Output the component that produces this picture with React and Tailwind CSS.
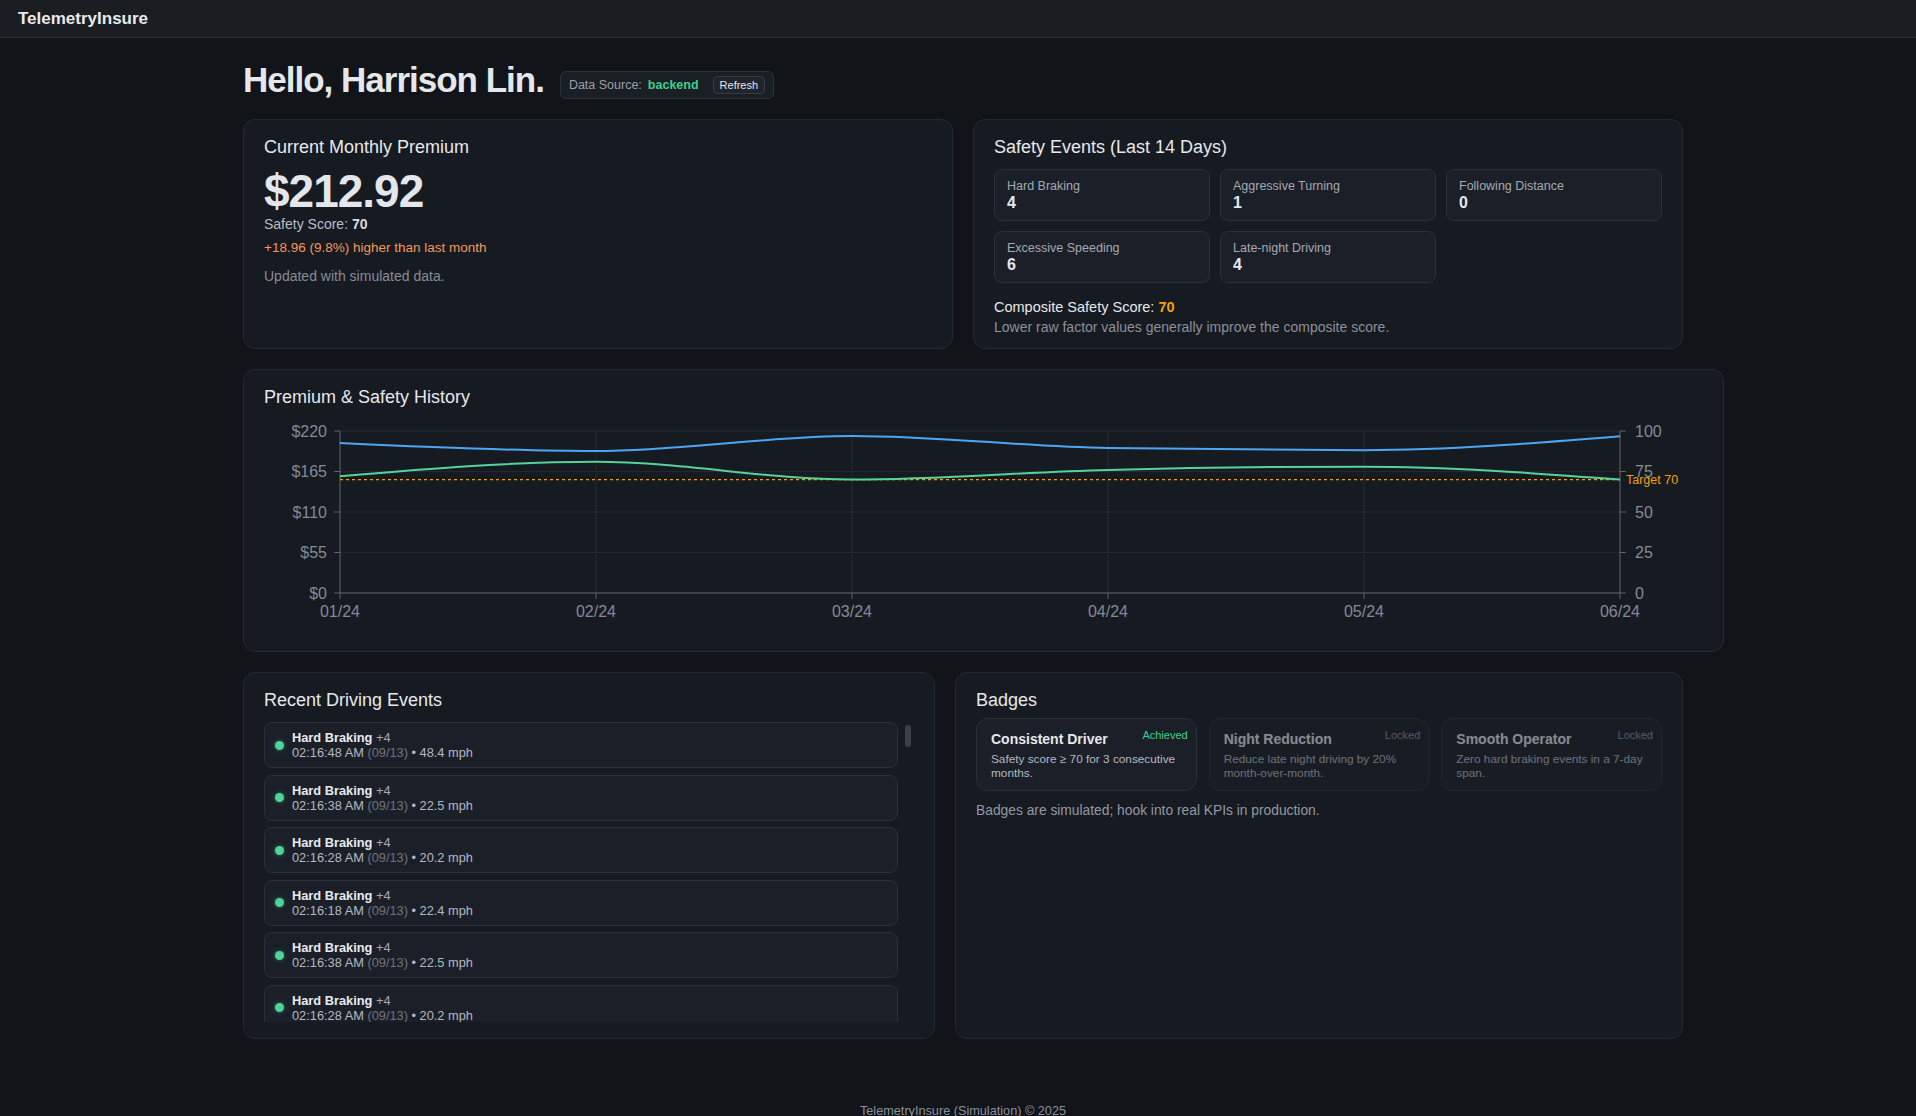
import React from "react";

const months = ["01/24", "02/24", "03/24", "04/24", "05/24", "06/24"];
const premiums = [203.7, 192.8, 213.2, 196.9, 193.96, 212.92];
const scores = [72, 81, 70, 76, 78, 70];

const factors = [
  ["Hard Braking", 4],
  ["Aggressive Turning", 1],
  ["Following Distance", 0],
  ["Excessive Speeding", 6],
  ["Late-night Driving", 4],
];

const badges = [
  { name: "Consistent Driver", desc: "Safety score ≥ 70 for 3 consecutive months.", done: true },
  { name: "Night Reduction", desc: "Reduce late night driving by 20% month-over-month.", done: false },
  { name: "Smooth Operator", desc: "Zero hard braking events in a 7-day span.", done: false },
];

const cycle = [
  ["02:16:48 AM", "48.4"],
  ["02:16:38 AM", "22.5"],
  ["02:16:28 AM", "20.2"],
  ["02:16:18 AM", "22.4"],
  ["02:16:38 AM", "22.5"],
  ["02:16:28 AM", "20.2"],
];
const events = Array.from({ length: 78 }, (_, i) => cycle[i % cycle.length]);

// d3-style monotone X curve
function monotonePath(pts) {
  const n = pts.length;
  const h = [];
  const m = [];
  for (let i = 0; i < n - 1; i++) {
    h.push(pts[i + 1][0] - pts[i][0]);
    m.push((pts[i + 1][1] - pts[i][1]) / h[i]);
  }
  const t = new Array(n).fill(0);
  for (let i = 1; i < n - 1; i++) {
    const s0 = m[i - 1];
    const s1 = m[i];
    const p = (s0 * h[i] + s1 * h[i - 1]) / (h[i - 1] + h[i]);
    t[i] = (Math.sign(s0) + Math.sign(s1)) * Math.min(Math.abs(s0), Math.abs(s1), 0.5 * Math.abs(p)) || 0;
  }
  t[0] = (3 * m[0] - t[1]) / 2;
  t[n - 1] = (3 * m[n - 2] - t[n - 2]) / 2;
  let d = `M${pts[0][0]},${pts[0][1]}`;
  for (let i = 0; i < n - 1; i++) {
    const dx = h[i] / 3;
    d += ` C${pts[i][0] + dx},${pts[i][1] + dx * t[i]} ${pts[i + 1][0] - dx},${pts[i + 1][1] - dx * t[i + 1]} ${pts[i + 1][0]},${pts[i + 1][1]}`;
  }
  return d;
}

function HistoryChart() {
  const x0 = 76;
  const x1 = 1356;
  const top = 12;
  const bottom = 174;
  const ph = bottom - top;
  const xs = months.map((_, i) => x0 + (i * (x1 - x0)) / 5);
  const yP = (v) => bottom - (v / 220) * ph;
  const yS = (v) => bottom - (v / 100) * ph;
  const ticks = [0, 1, 2, 3, 4];
  const premLine = monotonePath(premiums.map((v, i) => [xs[i], yP(v)]));
  const scoreLine = monotonePath(scores.map((v, i) => [xs[i], yS(v)]));
  const target = yS(70);

  return (
    <svg width="1439" height="212" className="block" style={{ fontFamily: "'Liberation Sans', Arial, sans-serif" }}>
      {ticks.map((k) => (
        <line key={"h" + k} x1={x0} x2={x1} y1={bottom - (k * ph) / 4} y2={bottom - (k * ph) / 4} stroke="#242931" />
      ))}
      {xs.map((x, i) => (
        <line key={"v" + i} x1={x} x2={x} y1={top} y2={bottom} stroke="#242931" />
      ))}

      <line x1={x0} x2={x0} y1={top} y2={bottom} stroke="#5c626c" />
      <line x1={x1} x2={x1} y1={top} y2={bottom} stroke="#5c626c" />
      <line x1={x0} x2={x1} y1={bottom} y2={bottom} stroke="#5c626c" />

      {ticks.map((k) => {
        const y = bottom - (k * ph) / 4;
        return (
          <g key={"t" + k}>
            <line x1={x0 - 6} x2={x0} y1={y} y2={y} stroke="#5c626c" />
            <text x={x0 - 13} y={y + 5.5} textAnchor="end" fontSize="16" fill="#858b95">
              ${[0, 55, 110, 165, 220][k]}
            </text>
            <line x1={x1} x2={x1 + 6} y1={y} y2={y} stroke="#5c626c" />
            <text x={x1 + 15} y={y + 5.5} fontSize="16" fill="#858b95">
              {[0, 25, 50, 75, 100][k]}
            </text>
          </g>
        );
      })}
      {xs.map((x, i) => (
        <g key={"x" + i}>
          <line x1={x} x2={x} y1={bottom} y2={bottom + 6} stroke="#5c626c" />
          <text x={x} y={bottom + 24} textAnchor="middle" fontSize="16" fill="#858b95">
            {months[i]}
          </text>
        </g>
      ))}

      <line x1={x0} x2={x1} y1={target} y2={target} stroke="#f59e0b" strokeWidth="1.3" strokeDasharray="3 3" />
      <path d={premLine} fill="none" stroke="#4ea6f2" strokeWidth="2" />
      <path d={scoreLine} fill="none" stroke="#55d39c" strokeWidth="2" />
      <text x={x1 + 6} y={target + 4.5} fontSize="12.5" fill="#f5a10b">
        Target 70
      </text>
    </svg>
  );
}

function Card({ className = "", children }) {
  return (
    <div className={"rounded-xl border border-[#252a32] bg-[#161a21] px-5 pt-[15px] " + className}>{children}</div>
  );
}

function CardTitle({ children, className = "mb-2.5" }) {
  return <h2 className={"text-[18px] leading-6 text-[#e6e8eb] " + className}>{children}</h2>;
}

export default function App() {
  return (
    <div className="min-h-screen bg-[#111418] font-['Liberation_Sans',Arial,sans-serif] text-[#e5e7eb]">
      <header className="h-[38px] border-b border-[#272b31] bg-[#1a1d21] px-[18px] flex items-center">
        <span className="text-[17px] font-bold text-[#e8eaed]">TelemetryInsure</span>
      </header>

      <main className="ml-[243px] w-[1440px] pt-[22px] pb-10">
        <div className="mb-[19px] flex items-end gap-4">
          <h1 className="text-[35px] leading-10 font-bold tracking-[-1px] text-[#e5e7eb]">Hello, Harrison Lin.</h1>
          <div className="mb-px flex h-7 items-center gap-1.5 rounded-md border border-[#2c313a] bg-[#1a1e25] pl-2 pr-2 text-[12.5px]">
            <span className="text-[#9aa0a8]">Data Source:</span>
            <span className="font-bold text-[#3fcf8e]">backend</span>
            <button className="ml-2 h-[18px] rounded border border-[#363c46] bg-[#20252d] px-[6px] text-[11px] leading-none text-[#e5e7eb]">
              Refresh
            </button>
          </div>
        </div>

        <div className="flex flex-col gap-5">
          <div className="grid grid-cols-2 gap-5">
            <Card className="pb-4">
              <CardTitle className="">Current Monthly Premium</CardTitle>
              <div className="mt-[9px] text-[46px] leading-[46px] font-bold tracking-[-1px] text-[#e3e6ea]">$212.92</div>
              <div className="text-[14px] leading-5 text-[#b9bec6]">
                Safety Score: <span className="font-bold text-[#d9dce0]">70</span>
              </div>
              <div className="mt-1 text-[13.5px] leading-5 text-[#f4975a]">+18.96 (9.8%) higher than last month</div>
              <div className="mt-2 text-[14px] leading-5 text-[#878d96]">Updated with simulated data.</div>
            </Card>

            <Card className="pb-[11px]">
              <CardTitle>Safety Events (Last 14 Days)</CardTitle>
              <div className="grid grid-cols-3 gap-2.5">
                {factors.map(([label, value]) => (
                  <div key={label} className="rounded-lg border border-[#2a3038] bg-[#1b2028] px-3 pt-2 pb-2">
                    <div className="text-[12.5px] leading-4 text-[#a3a9b1]">{label}</div>
                    <div className="text-[16px] leading-[18px] font-bold text-[#e6e8eb]">{value}</div>
                  </div>
                ))}
              </div>
              <div className="mt-3.5 text-[14.5px] leading-5 text-[#e6e8eb]">
                Composite Safety Score: <span className="font-bold text-[#f5a10b]">70</span>
              </div>
              <div className="text-[14px] leading-5 text-[#8b9199]">
                Lower raw factor values generally improve the composite score.
              </div>
            </Card>
          </div>

          <Card className="w-[1481px] pb-5">
            <CardTitle className="mb-2.5">Premium &amp; Safety History</CardTitle>
            <HistoryChart />
          </Card>

          <div className="grid grid-cols-[692px_1fr] gap-5">
            <Card className="pb-4">
              <CardTitle>Recent Driving Events</CardTitle>
              <div className="relative">
                <div className="h-[300px] overflow-y-auto pr-4 flex flex-col gap-[6.5px] [scrollbar-width:none]">
                  {events.map(([time, speed], i) => (
                    <div
                      key={i}
                      className="flex shrink-0 items-center gap-2 rounded-lg border border-[#2a3038] bg-[#1b2028] px-[10px] py-[7px]"
                    >
                      <span className="h-[9px] w-[9px] shrink-0 rounded-full bg-[#4fd39a] shadow-[0_0_4px_rgba(79,211,154,0.45)]" />
                      <div className="text-[12.8px] leading-[15px]">
                        <div>
                          <span className="font-bold text-[#e8eaed]">Hard Braking</span>{" "}
                          <span className="text-[#a3a9b1]">+4</span>
                        </div>
                        <div className="text-[#b3b9c1]">
                          {time} <span className="text-[#6e747d]">(09/13)</span> • {speed} mph
                        </div>
                      </div>
                    </div>
                  ))}
                </div>
                <div className="absolute right-[3px] top-[3px] h-[22px] w-[6px] rounded-full bg-[#3a414b]" />
              </div>
            </Card>

            <Card className="pb-4">
              <CardTitle className="mb-1.5">Badges</CardTitle>
              <div className="grid grid-cols-3 gap-3">
                {badges.map((b) => (
                  <div
                    key={b.name}
                    className={
                      "relative rounded-xl border border-[#2a3038] bg-[#1b2028] pl-[14px] pr-3 pt-[11px] pb-[10px] " +
                      (b.done ? "" : "opacity-55")
                    }
                  >
                    <span
                      className={
                        "absolute right-2 top-2 text-[11px] leading-4 " + (b.done ? "text-[#3fcf8e]" : "text-[#8a9099]")
                      }
                    >
                      {b.done ? "Achieved" : "Locked"}
                    </span>
                    <div className="text-[14px] leading-[18px] font-bold text-[#e6e8eb]">{b.name}</div>
                    <div className="mt-1 text-[11.8px] leading-[14px] text-[#b3b9c1]">{b.desc}</div>
                  </div>
                ))}
              </div>
              <div className="mt-2.5 text-[13.8px] leading-5 text-[#9299a2]">
                Badges are simulated; hook into real KPIs in production.
              </div>
            </Card>
          </div>
        </div>
      </main>

      <footer className="ml-[243px] w-[1440px] pt-6 pb-6 text-center text-[12.7px] leading-4 text-[#8a9099]">
        TelemetryInsure (Simulation) © 2025
      </footer>
    </div>
  );
}
